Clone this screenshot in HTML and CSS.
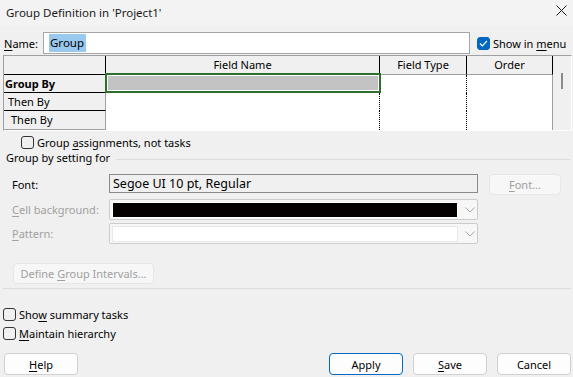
FILE: index.html
```html
<!DOCTYPE html>
<html lang="en">
<head>
    <meta charset="UTF-8">
    <title>Group Definition in 'Project1'</title>
    <link rel="stylesheet" href="styles.css">
</head>
<body>
    <div class="titlebar">
        <span class="title">Group Definition in 'Project1'</span>
        <svg class="close" width="11" height="11" viewBox="0 0 11 11">
            <path d="M0.5 0.5 L10.5 10.5 M10.5 0.5 L0.5 10.5" stroke="#1a1a1a" stroke-width="1"/>
        </svg>
    </div>

    <div class="name-row">
        <label class="name-label"><u>N</u>ame:</label>
        <div class="name-input"><span class="selected-text">Group</span></div>
        <label class="check">
            <span class="box checked">
                <svg width="9" height="7" viewBox="0 0 9 7"><path d="M1 3.5 L3.3 5.8 L8 1" fill="none" stroke="#fff" stroke-width="1.2"/></svg>
            </span>
            <span>Show in <u>m</u>enu</span>
        </label>
    </div>

    <div class="grid">
        <div class="hd corner"></div>
        <div class="hd">Field Name</div>
        <div class="hd">Field Type</div>
        <div class="hd">Order</div>
        <div class="scroll"><span class="thumb"></span></div>

        <div class="rh bold">Group By</div>
        <div class="cell name current"></div>
        <div class="cell type"></div>
        <div class="cell order"></div>

        <div class="rh indent1">Then By</div>
        <div class="cell name"></div>
        <div class="cell type"></div>
        <div class="cell order"></div>

        <div class="rh indent2 bottom">Then By</div>
        <div class="cell name"></div>
        <div class="cell type"></div>
        <div class="cell order"></div>
    </div>

    <label class="check assign-row">
        <span class="box"></span>
        <span>Group <u>a</u>ssignments, not tasks</span>
    </label>

    <div class="section-head">
        <span>Group by setting for</span>
        <span class="section-line"></span>
    </div>

    <div class="form-row font-row">
        <span class="form-label">Font:</span>
        <div class="font-field">Segoe UI 10 pt, Regular</div>
        <button class="btn disabled font-btn"><u>F</u>ont...</button>
    </div>

    <div class="form-row combo-row">
        <span class="form-label dim"><u>C</u>ell background:</span>
        <div class="combo">
            <span class="swatch black"></span>
            <svg class="chevron" width="10" height="6" viewBox="0 0 10 6"><path d="M0.5 0.5 L5 5 L9.5 0.5" fill="none" stroke="#a8a8a8" stroke-width="1"/></svg>
        </div>
    </div>

    <div class="form-row combo-row second">
        <span class="form-label dim"><u>P</u>attern:</span>
        <div class="combo">
            <span class="swatch white"></span>
            <svg class="chevron" width="10" height="6" viewBox="0 0 10 6"><path d="M0.5 0.5 L5 5 L9.5 0.5" fill="none" stroke="#a8a8a8" stroke-width="1"/></svg>
        </div>
    </div>

    <button class="btn disabled intervals-btn">Define <u>G</u>roup Intervals...</button>

    <div class="separator"></div>

    <label class="check option-row">
        <span class="box"></span>
        <span>Sho<u>w</u> summary tasks</span>
    </label>
    <label class="check option-row second">
        <span class="box"></span>
        <span><u>M</u>aintain hierarchy</span>
    </label>

    <div class="footer">
        <button class="btn"><u>H</u>elp</button>
        <div class="footer-right">
            <button class="btn default">Apply</button>
            <button class="btn"><u>S</u>ave</button>
            <button class="btn">Cancel</button>
        </div>
    </div>
</body>
</html>
```

FILE: styles.css
```css
* {
    box-sizing: border-box;
}
body {
    margin: 0;
    width: 573px;
    height: 377px;
    overflow: hidden;
    background: #f0f0f0;
    font-family: "Noto Sans", "Open Sans", sans-serif;
    font-size: 11px;
    color: #000;
}
u {
    text-decoration: underline;
    text-underline-offset: 2px;
}
.titlebar {
    height: 26px;
    background: #f3f3f3;
    display: flex;
    align-items: center;
    justify-content: space-between;
    padding: 0 6px 2px 6px;
}
.title {
    color: #1a1a1a;
    font-size: 11.5px;
}
.close {
    margin-top: -4px;
}

/* name row */
.name-row {
    display: flex;
    align-items: center;
    height: 22px;
    margin-top: 6px;
    padding-left: 4px;
}
.name-label {
    width: 39px;
}
.name-input {
    width: 427px;
    height: 22px;
    background: #fff;
    border: 1px solid #a6a6a6;
    padding: 2px 0 0 5px;
    font-size: 11.5px;
}
.selected-text {
    background: #99c9ef;
    padding: 1px 2px 2px 1px;
}
.check {
    display: flex;
    align-items: center;
}
.name-row .check {
    margin-left: 7px;
}
.box {
    width: 13px;
    height: 13px;
    border: 1px solid #333;
    border-radius: 3px;
    margin-right: 3px;
    display: flex;
    align-items: center;
    justify-content: center;
    flex: none;
}
.box.checked {
    background: #0067c0;
    border-color: #0067c0;
}

/* grid */
.grid {
    margin: 1px 0 0 3px;
    width: 569px;
    border-top: 1px solid #a0a0a0;
    border-left: 1px solid #a0a0a0;
    border-right: 1px solid #fff;
    border-bottom: 1px solid #fff;
    display: grid;
    grid-template-columns: 102px 274px 87px 86px 18px;
    grid-template-rows: 19px 18px 18px 19px;
}
.hd {
    background: #f0f0f0;
    border-right: 1px solid #000;
    border-bottom: 1px solid #a0a0a0;
    text-align: center;
    line-height: 18px;
}
.hd.corner {
    border-bottom: 1px solid #000;
}
.scroll {
    grid-column: 5;
    grid-row: 1 / span 4;
    background: #f0f0f0;
    position: relative;
}
.thumb {
    position: absolute;
    left: 8px;
    top: 17px;
    width: 2px;
    height: 16px;
    background: #8a8a8a;
}
.rh {
    background: #f0f0f0;
    border-right: 1px solid #a0a0a0;
    border-bottom: 1px solid #000;
    line-height: 17px;
    padding-left: 1px;
}
.rh.bold {
    font-weight: bold;
}
.rh.indent1 {
    padding-left: 4px;
}
.rh.indent2 {
    padding-left: 7px;
}
.rh.bottom {
    border-bottom-color: #a0a0a0;
}
.cell {
    background: #fff;
}
.cell.name,
.cell.type {
    border-right: 1px dotted #000;
}
.cell.order {
    border-right: 1px solid #a0a0a0;
}
.cell.current {
    position: relative;
    z-index: 1;
    margin: -2px -1px 0 -1px;
    border-right: none;
    background: #c3c3c3;
    box-shadow: inset 0 0 0 2px #2e6f30, inset 0 0 0 3px #fff;
}

/* options */
.assign-row {
    margin: 3px 0 0 21px;
    height: 16px;
}
.section-head {
    display: flex;
    align-items: center;
    height: 15px;
    padding-left: 6px;
}
.section-line {
    flex: 1;
    height: 1px;
    background: #dcdcdc;
    margin: 3px 3px 0 6px;
}
.form-row {
    display: flex;
    align-items: flex-start;
    padding-left: 12px;
    height: 21px;
}
.font-row {
    margin-top: 9px;
}
.combo-row {
    margin-top: 4px;
}
.combo-row.second {
    margin-top: 3px;
}
.form-label {
    width: 97px;
    line-height: 19px;
    padding-top: 1px;
}
.form-label.dim {
    color: #a0a0a0;
}
.font-field {
    width: 369px;
    height: 19px;
    border: 1px solid #8a8a8a;
    background: #f0f0f0;
    font-size: 12.5px;
    line-height: 17px;
    padding-left: 3px;
}
.btn {
    font-family: inherit;
    font-size: 11px;
    color: #000;
    background: #fdfdfd;
    border: 1px solid #d0d0d0;
    border-radius: 4px;
    height: 22px;
    width: 74px;
    padding: 0;
}
.btn.disabled {
    color: #a0a0a0;
    background: #f7f7f7;
    border-color: #e6e6e6;
}
.font-btn {
    margin-left: 11px;
    width: 72px;
    height: 21px;
}
.combo {
    width: 369px;
    height: 21px;
    border: 1px solid #cccccc;
    border-radius: 2px;
    background: #f7f7f7;
    display: flex;
    align-items: center;
    padding-left: 2px;
}
.swatch {
    width: 346px;
    height: 16px;
    border: 1px solid #fff;
}
.swatch.black {
    background: #050000;
}
.swatch.white {
    background: #fff;
    border-color: #e8e8e8;
}
.chevron {
    margin-left: 7px;
}
.intervals-btn {
    margin: 19px 0 0 13px;
    width: 141px;
    height: 21px;
    display: block;
}
.separator {
    margin: 4px 0 0 3px;
    width: 568px;
    height: 1px;
    background: #dcdcdc;
}
.option-row {
    margin: 17px 0 0 3px;
    height: 16px;
}
.option-row.second {
    margin-top: 3px;
}
.footer {
    margin: 12px 0 0 4px;
    width: 567px;
    display: flex;
    justify-content: space-between;
}
.footer-right {
    display: flex;
    gap: 10px;
}
.btn.default {
    border-color: #0067c0;
}
```
